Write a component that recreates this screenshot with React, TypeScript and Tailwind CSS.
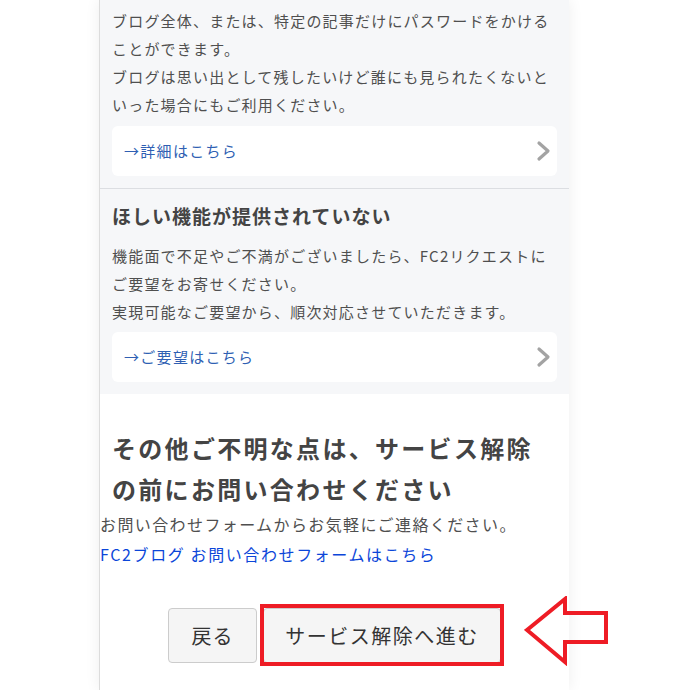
const font = { fontFamily: '"Noto Sans CJK JP", "Noto Sans", sans-serif' };

function LinkBox({ label }: { label: string }) {
  return (
    <a
      href="#"
      className="flex h-[50px] items-center justify-between rounded-md bg-white pl-[12px] pr-[6px] text-[15px] tracking-[1.3px] text-[#2f5fb3]"
    >
      <span>{label}</span>
      <svg width="15" height="22" viewBox="0 0 15 22" aria-hidden="true">
        <polyline
          points="3,3 12,11 3,19"
          fill="none"
          stroke="#a3a3a3"
          strokeWidth="3.2"
          strokeLinecap="round"
          strokeLinejoin="round"
        />
      </svg>
    </a>
  );
}

export default function App() {
  return (
    <div className="min-h-[690px] bg-white" style={font}>
      <div className="mx-auto h-[690px] w-[470px] -translate-x-[16px] overflow-hidden border-l border-[#dcdcdc] bg-white shadow-[0_0_14px_rgba(0,0,0,0.07)]">
        <section className="bg-[#f6f7f9]">
          <div className="border-b border-[#dcdee2] px-[12px] pb-[12px] pt-[7px]">
            <p className="text-[15px] leading-[28px] tracking-[1.2px] text-[#4f4f4f]">
              ブログ全体、または、特定の記事だけにパスワードをかけることができます。
              <br />
              ブログは思い出として残したいけど誰にも見られたくないといった場合にもご利用ください。
            </p>
            <div className="mt-[7px]">
              <LinkBox label="→詳細はこちら" />
            </div>
          </div>

          <div className="px-[12px] pb-[12px] pt-[13px]">
            <h3 className="text-[19px] font-bold leading-[28px] tracking-[1px] text-[#444]">
              ほしい機能が提供されていない
            </h3>
            <p className="mt-[12px] text-[15px] leading-[28px] tracking-[1.2px] text-[#4f4f4f]">
              機能面で不足やご不満がございましたら、FC2リクエストにご要望をお寄せください。
              <br />
              実現可能なご要望から、順次対応させていただきます。
            </p>
            <div className="mt-[6px]">
              <LinkBox label="→ご要望はこちら" />
            </div>
          </div>
        </section>

        <section className="pt-[33px]">
          <h2 className="px-[12px] text-[24px] font-bold leading-[41px] tracking-[2.3px] text-[#444]">
            その他ご不明な点は、サービス解除
            <br />
            の前にお問い合わせください
          </h2>
          <p className="text-[16px] leading-[30px] tracking-[1.4px] text-[#4f4f4f]">
            お問い合わせフォームからお気軽にご連絡ください。
          </p>
          <a href="#" className="block text-[16px] leading-[30px] tracking-[1.6px] text-[#0b46d9]">
            FC2ブログ お問い合わせフォームはこちら
          </a>

          <div className="mt-[39px] flex justify-center gap-[6px]">
            <button className="h-[55px] w-[89px] rounded-[4px] border border-[#cccccc] bg-[#f5f5f5] text-[20px] tracking-[1px] text-[#333]">
              戻る
            </button>
            <div className="relative">
              <button className="h-[55px] w-[238px] rounded-[4px] border border-[#cccccc] bg-[#f5f5f5] text-[20px] tracking-[1.5px] text-[#333]">
                サービス解除へ進む
              </button>
              <div className="pointer-events-none absolute -bottom-[3px] -left-[3px] -right-[3px] -top-[4px] border-[4px] border-[#ee1c25]" />
            </div>
          </div>
        </section>
      </div>

      <svg
        className="absolute left-[524px] top-[596px]"
        width="86"
        height="70"
        viewBox="0 0 86 70"
      >
        <polygon
          points="3,34 41,3 41,17 82,17 82,46 41,46 41,66"
          fill="none"
          stroke="#ee1c25"
          strokeWidth="4"
          strokeLinejoin="miter"
        />
      </svg>
    </div>
  );
}
